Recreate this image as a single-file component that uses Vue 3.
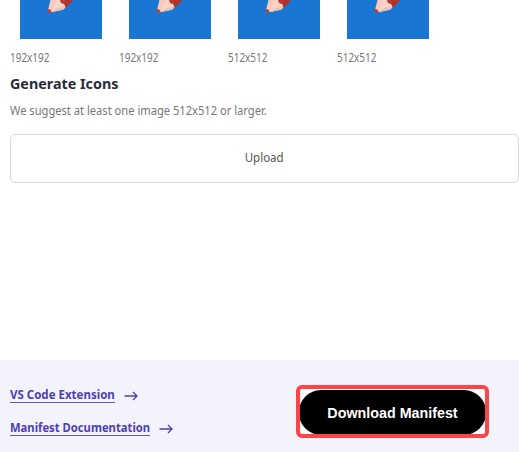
<script setup>
const icons = ['192x192', '192x192', '512x512', '512x512']
const links = [
  { label: 'VS Code Extension', cls: 'vs' },
  { label: 'Manifest Documentation', cls: 'docs' },
]
</script>

<template>
  <main class="page">
    <section class="content">
      <div class="icons">
        <figure v-for="(size, i) in icons" :key="i" class="tile">
          <svg class="art" viewBox="0 0 82 39">
            <rect width="82" height="39" fill="#1976d3" />
            <path d="M30.5 0H42L45.8 7.2 43 9.8 31.5 12.2 28 10Z" fill="#f8cabe" />
            <path d="M36.5 0H42L44 5 32 11Z" fill="#fad4c9" />
            <path d="M31.8 12 39 7.8 45.5 7.2 43 9.8Z" fill="#e8c0b5" />
            <path d="M40.3 0H53.3L45.6 8.2Q46 5 43.6 3.6 40.6 3.8 40.3 0Z" fill="#b23429" />
            <path d="M40.3 0H46L43.6 3.6Q40.6 3.8 40.3 0Z" fill="#bb382d" />
            <path d="M28.2 9Q30.6 8.6 31.8 11.6L28 12.9Q26.9 12.5 27.4 11.3Z" fill="#c63b2c" />
          </svg>
          <figcaption><span class="size">{{ size }}</span></figcaption>
        </figure>
      </div>
      <h2><span class="heading">Generate Icons</span></h2>
      <p><span class="hint">We suggest at least one image 512x512 or larger.</span></p>
      <button class="upload"><span>Upload</span></button>
    </section>
    <footer class="footer">
      <nav class="links">
        <a v-for="link in links" :key="link.label" class="link">
          <span class="label" :class="link.cls"><span>{{ link.label }}</span></span>
          <svg class="arrow" viewBox="0 0 14 10">
            <path d="M0.5 5H13M9 1L13 5L9 9" fill="none" stroke="#4f3fb6" stroke-width="1.3" />
          </svg>
        </a>
      </nav>
      <div class="highlight">
        <button class="download">Download Manifest</button>
      </div>
    </footer>
  </main>
</template>

<style>
body { background: #fff; overflow: hidden; }
</style>

<style scoped>
* { box-sizing: border-box; }
.page {
  width: 519px; height: 452px; overflow: hidden;
  display: flex; flex-direction: column;
  font-family: "Noto Sans", sans-serif; font-size: 13px;
}
.content { height: 360px; padding-left: 10px; }
.icons { display: flex; gap: 27px; }
.tile { margin: 0; width: 82px; height: 67px; }
.art { display: block; width: 82px; height: 39px; margin-left: 10px; }
figcaption { height: 28px; padding-top: 8px; line-height: 20px; color: #777; }
.size, .heading, .hint, .upload span, .label span {
  display: inline-block; white-space: nowrap; transform-origin: left center;
}
.size { font-size: 13px; transform: scaleX(.765); }
h2 { margin: 6px 0 0; height: 24px; line-height: 20px; font-size: 15px; font-weight: 700; color: #292b3a; }
.heading { transform: scaleX(.955); }
p { margin: 4px 0 0; height: 20px; line-height: 20px; font-size: 12.5px; color: #777; }
.hint { transform: scaleX(.891); }
.upload {
  display: flex; align-items: center; justify-content: center;
  margin-top: 13px; width: 509px; height: 49px; padding: 0 0 2px;
  border: 1px solid #d9d9d9; border-radius: 5px; background: #fff;
  font: 12.5px "Noto Sans", sans-serif; color: #555;
}
.upload span { transform: scaleX(.92); transform-origin: center; }
.footer {
  height: 92px; background: #f2f3fb; padding: 25px 30px 0 10px;
  display: flex; justify-content: space-between; align-items: flex-start;
}
.links { display: flex; flex-direction: column; gap: 14px; }
.link { display: flex; align-items: flex-start; gap: 9px; height: 19px; color: #4f3fb6; }
.label { height: 18px; line-height: 19px; font-size: 12.5px; font-weight: 700; border-bottom: 1px solid #6658c2; }
.label span { transform: scaleX(.92); }
.vs { width: 105px; }
.docs { width: 140px; }
.docs span { transform: scaleX(.9); }
.arrow { width: 14px; height: 10px; margin-top: 6px; }
.highlight {
  width: 193px; height: 53px; border: 4px solid #ff4448; border-radius: 6px; background: #fafaff;
  padding-top: 1px; overflow: hidden;
}
.download {
  display: block; width: 187px; height: 45px; margin-left: -1px; padding: 0;
  border: 0; border-radius: 22px; background: #000; color: #fff;
  font: bold 14.3px "Liberation Sans", sans-serif; white-space: nowrap;
}
</style>
